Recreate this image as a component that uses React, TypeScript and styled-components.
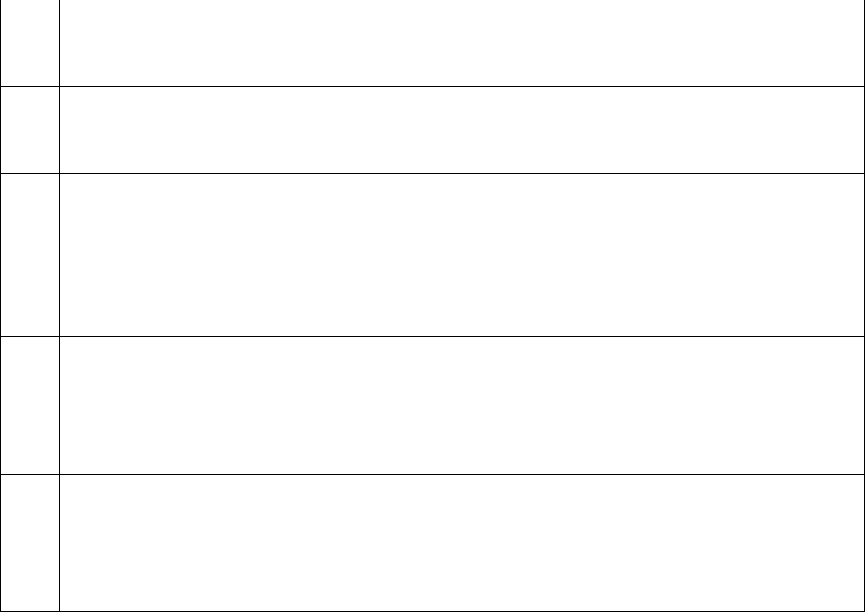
import React from "react";
import styled, { createGlobalStyle } from "styled-components";

const Global = createGlobalStyle`
  html, body { margin: 0; padding: 0; background: #ffffff; }
  body { font-family: "Liberation Sans", Arial, sans-serif; }
`;

const Table = styled.div`
  width: 865px;
  box-sizing: border-box;
  border-left: 1px solid #000;
  border-right: 1px solid #000;
  border-bottom: 1px solid #000;
  display: flex;
  flex-direction: column;
`;

const Row = styled.div<{ $h: number; $first?: boolean }>`
  display: grid;
  grid-template-columns: 59px 1fr;
  height: ${(p) => p.$h}px;
  border-top: ${(p) => (p.$first ? "none" : "1px solid #000")};
`;

const IndexCell = styled.div`
  border-right: 1px solid #000;
`;

const ContentCell = styled.div``;

const rows = [86, 86, 162, 137, 136];

export default function App() {
  return (
    <>
      <Global />
      <Table>
        {rows.map((h, i) => (
          <Row key={i} $h={h} $first={i === 0}>
            <IndexCell />
            <ContentCell />
          </Row>
        ))}
      </Table>
    </>
  );
}
